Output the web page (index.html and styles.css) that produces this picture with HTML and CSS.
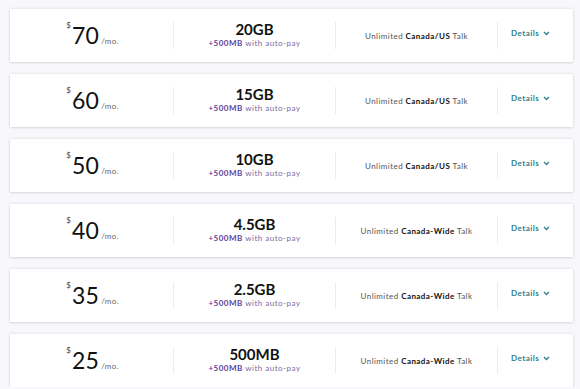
FILE: index.html
```html
<!DOCTYPE html>
<html>
<head>
<meta charset="utf-8">
<link rel="stylesheet" href="styles.css">
</head>
<body>
<div class="plans">
  <div class="card">
    <div class="col price"><span class="cur">$</span><span class="amt">70</span><span class="per">/mo.</span></div>
    <div class="col data"><div class="gb">20GB</div><div class="bonus"><b>+500MB</b> with auto-pay</div></div>
    <div class="col talk">Unlimited <b>Canada/US</b> Talk</div>
    <div class="col details">Details <svg class="chev" width="7" height="5" viewBox="0 0 7 5"><path d="M1 1 L3.5 3.5 L6 1" fill="none" stroke="#2f7f8d" stroke-width="1.3"/></svg></div>
  </div>
  <div class="card">
    <div class="col price"><span class="cur">$</span><span class="amt">60</span><span class="per">/mo.</span></div>
    <div class="col data"><div class="gb">15GB</div><div class="bonus"><b>+500MB</b> with auto-pay</div></div>
    <div class="col talk">Unlimited <b>Canada/US</b> Talk</div>
    <div class="col details">Details <svg class="chev" width="7" height="5" viewBox="0 0 7 5"><path d="M1 1 L3.5 3.5 L6 1" fill="none" stroke="#2f7f8d" stroke-width="1.3"/></svg></div>
  </div>
  <div class="card">
    <div class="col price"><span class="cur">$</span><span class="amt">50</span><span class="per">/mo.</span></div>
    <div class="col data"><div class="gb">10GB</div><div class="bonus"><b>+500MB</b> with auto-pay</div></div>
    <div class="col talk">Unlimited <b>Canada/US</b> Talk</div>
    <div class="col details">Details <svg class="chev" width="7" height="5" viewBox="0 0 7 5"><path d="M1 1 L3.5 3.5 L6 1" fill="none" stroke="#2f7f8d" stroke-width="1.3"/></svg></div>
  </div>
  <div class="card">
    <div class="col price"><span class="cur">$</span><span class="amt">40</span><span class="per">/mo.</span></div>
    <div class="col data"><div class="gb">4.5GB</div><div class="bonus"><b>+500MB</b> with auto-pay</div></div>
    <div class="col talk">Unlimited <b>Canada-Wide</b> Talk</div>
    <div class="col details">Details <svg class="chev" width="7" height="5" viewBox="0 0 7 5"><path d="M1 1 L3.5 3.5 L6 1" fill="none" stroke="#2f7f8d" stroke-width="1.3"/></svg></div>
  </div>
  <div class="card">
    <div class="col price"><span class="cur">$</span><span class="amt">35</span><span class="per">/mo.</span></div>
    <div class="col data"><div class="gb">2.5GB</div><div class="bonus"><b>+500MB</b> with auto-pay</div></div>
    <div class="col talk">Unlimited <b>Canada-Wide</b> Talk</div>
    <div class="col details">Details <svg class="chev" width="7" height="5" viewBox="0 0 7 5"><path d="M1 1 L3.5 3.5 L6 1" fill="none" stroke="#2f7f8d" stroke-width="1.3"/></svg></div>
  </div>
  <div class="card">
    <div class="col price"><span class="cur">$</span><span class="amt">25</span><span class="per">/mo.</span></div>
    <div class="col data"><div class="gb">500MB</div><div class="bonus"><b>+500MB</b> with auto-pay</div></div>
    <div class="col talk">Unlimited <b>Canada-Wide</b> Talk</div>
    <div class="col details">Details <svg class="chev" width="7" height="5" viewBox="0 0 7 5"><path d="M1 1 L3.5 3.5 L6 1" fill="none" stroke="#2f7f8d" stroke-width="1.3"/></svg></div>
  </div>
</div>
</body>
</html>
```
FILE: styles.css
```css
html, body {
  margin: 0;
  background: #f8f7fb;
}
body {
  padding: 9px 7px 0 10px;
  font-family: "Lato", "Noto Sans", sans-serif;
  color: #222;
}
.plans {
  display: flex;
  flex-direction: column;
  gap: 12px;
}
.card {
  height: 53px;
  background: #fff;
  box-shadow: 0 0 3px rgba(0, 0, 0, 0.12), 0 1px 2px rgba(0, 0, 0, 0.08);
  display: flex;
  align-items: center;
}
.col {
  height: 27px;
  display: flex;
  flex-direction: column;
  justify-content: center;
  align-items: center;
  border-left: 1px solid #ececec;
}
.col:first-child {
  border-left: none;
}
.price {
  width: 163px;
  flex-direction: row;
  align-items: baseline;
  justify-content: center;
  padding-left: 2px;
  box-sizing: border-box;
}
.cur {
  font-size: 8px;
  color: #444;
  align-self: flex-start;
  margin-top: -2px;
  margin-right: 1px;
}
.amt {
  font-size: 23px;
  color: #111;
  line-height: 1;
  letter-spacing: 0.3px;
  margin-top: 2px;
}
.per {
  font-size: 8px;
  color: #666;
  margin-left: 2px;
  letter-spacing: 0.3px;
}
.data {
  width: 161px;
}
.gb {
  font-size: 15px;
  font-weight: 700;
  color: #111;
  line-height: 17px;
  margin-top: -1px;
}
.bonus {
  font-size: 8px;
  color: #7b6aa3;
  letter-spacing: 0.5px;
  line-height: 11px;
}
.bonus b {
  color: #5a3d9c;
}
.talk {
  width: 162px;
  font-size: 8px;
  color: #555;
  letter-spacing: 0.45px;
  flex-direction: row;
  white-space: pre;
  padding-top: 1px;
  box-sizing: border-box;
}
.talk b {
  color: #111;
}
.details {
  flex: 1;
  flex-direction: row;
  justify-content: flex-start;
  align-items: center;
  padding-left: 13px;
  padding-bottom: 5px;
  box-sizing: border-box;
  font-size: 8px;
  color: #2f7f8d;
  letter-spacing: 0.5px;
  font-weight: 700;
}
.chev {
  margin-left: 4px;
}
```
